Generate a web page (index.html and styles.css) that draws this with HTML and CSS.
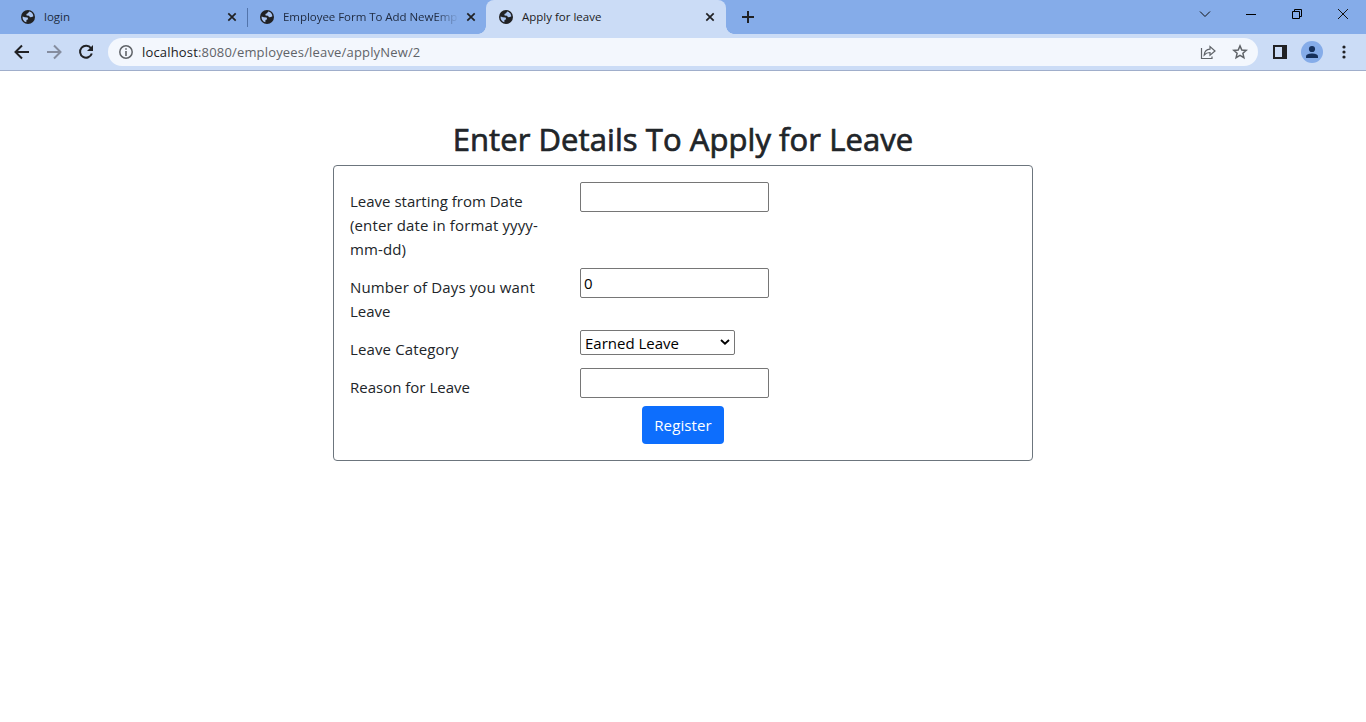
FILE: index.html
```html
<!DOCTYPE html>
<html lang="en">
<head>
<meta charset="utf-8">
<title>Apply for leave</title>
<link rel="stylesheet" href="styles.css">
</head>
<body>
<svg class="defs" width="0" height="0">
  <symbol id="globe" viewBox="0 0 14 14"><circle cx="7" cy="7" r="7" fill="#202124"/><path d="M8.2 1.6 7 3.200 5.400 4.100 5.600 5.600 8 5.800 9 7.200 11 7 12.400 6.200A5.500 5.500 0 0 0 8.200 1.600ZM1.600 6.500 3.800 7.300 6.600 7.500 7.200 9.200 5.500 10.100 5.300 12.300A5.600 5.600 0 0 1 1.600 6.500Z" fill="#a9c4f0"/></symbol>
  <symbol id="close" viewBox="0 0 10 10"><path d="M1.300 1.300 8.700 8.700M8.700 1.300 1.300 8.700" stroke="#202124" stroke-width="1.700"/></symbol>
</svg>
<header class="browser">
  <div class="tabstrip">
    <div class="tab tab-first"><svg class="favicon"><use href="#globe"/></svg><span class="tab-title">login</span><svg class="close"><use href="#close"/></svg></div>
    <div class="tab tab-second"><svg class="favicon"><use href="#globe"/></svg><span class="tab-title fade">Employee Form To Add NewEmp</span><svg class="close"><use href="#close"/></svg></div>
    <div class="tab tab-active"><svg class="favicon"><use href="#globe"/></svg><span class="tab-title">Apply for leave</span><svg class="close"><use href="#close"/></svg></div>
    <svg class="new-tab" viewBox="0 0 12 12"><path d="M6 0v12M0 6h12" stroke="#202124" stroke-width="2"/></svg>
    <div class="window-controls">
      <svg viewBox="0 0 12 12"><path d="M1 3.500 6 8.500 11 3.500" fill="none" stroke="#111"/></svg>
      <svg viewBox="0 0 12 12"><path d="M1 6.500h10" stroke="#000"/></svg>
      <svg viewBox="0 0 12 12"><path d="M1.500 3.500h7v7h-7zM3.500 3.500v-2h7v7h-2" fill="none" stroke="#000"/></svg>
      <svg viewBox="0 0 12 12"><path d="M1 1 11 11M11 1 1 11" stroke="#111"/></svg>
    </div>
  </div>
  <div class="toolbar">
    <svg class="nav" viewBox="0 0 16 16"><path d="M15 8H2M8 1.500 1.500 8 8 14.500" fill="none" stroke="#202124" stroke-width="2"/></svg>
    <svg class="nav" viewBox="0 0 16 16"><path d="M1 8h13M8 1.500 14.500 8 8 14.500" fill="none" stroke="#858d9f" stroke-width="2"/></svg>
    <svg class="nav" viewBox="0 0 16 16"><path d="M13 4.300A6 6 0 1 0 13.800 9.500" fill="none" stroke="#202124" stroke-width="2"/><path d="M15 1v6H9Z" fill="#202124"/></svg>
    <div class="address">
      <svg class="info" viewBox="0 0 14 14"><circle cx="7" cy="7" r="6.200" fill="none" stroke="#5f6368" stroke-width="1.500"/><path d="M7 3.200v1.600M7 6v5" stroke="#5f6368" stroke-width="1.600"/></svg>
      <span class="url"><b>localhost</b>:8080/employees/leave/applyNew/2</span>
      <svg class="share" viewBox="0 0 16 16"><path d="M1.500 4v10.500h10.500V12.500M4.200 11C4.500 7.500 6.500 5.400 10 5.200V2.500L15 7l-5 4.200V8.500C7.500 8.500 5.700 9.200 4.200 11Z" fill="none" stroke="#5f6368" stroke-width="1.200"/></svg>
      <svg class="star" viewBox="0 0 16 16"><path d="M8 1.900 9.800 6 14.200 6.400 10.900 9.300 11.900 13.700 8 11.400 4.100 13.700 5.100 9.300 1.800 6.400 6.200 6Z" fill="none" stroke="#5f6368" stroke-width="1.500"/></svg>
    </div>
    <svg class="panel" viewBox="0 0 14 14"><path d="M0 0h14v14H0ZM2 2v10h7V2Z" fill="#202124" fill-rule="evenodd"/></svg>
    <svg class="avatar" viewBox="0 0 22 22"><circle cx="11" cy="11" r="11" fill="#85ace9"/><circle cx="11" cy="8" r="3.100" fill="#16305b"/><path d="M5 17v-1.500C5 13.200 8.500 12.500 11 12.500s6 .7 6 3V17Z" fill="#16305b"/></svg>
    <svg class="dots" viewBox="0 0 4 14"><circle cx="2" cy="2" r="1.600"/><circle cx="2" cy="7" r="1.600"/><circle cx="2" cy="12" r="1.600"/></svg>
  </div>
</header>
<main>
  <h2>Enter Details To Apply for Leave</h2>
  <form class="card">
    <div class="row"><label for="start">Leave starting from Date<br><span class="loose">(enter date in format yyyy-</span><br><span class="loose">mm-dd)</span></label><input id="start" type="text"></div>
    <div class="row"><label for="days"><span class="loose">Number of Days you want</span><br>Leave</label><input id="days" type="text" value="0"></div>
    <div class="row"><label for="category"><span class="loose">Leave Category</span></label>
      <div class="select-wrap"><select id="category"><option>Earned Leave</option></select><svg class="chevron" viewBox="0 0 10 6"><path d="M1 1 5 4.600 9 1" fill="none" stroke="#000" stroke-width="1.900"/></svg></div></div>
    <div class="row"><label for="reason">Reason for Leave</label><input id="reason" type="text"></div>
    <button type="button">Register</button>
  </form>
</main>
</body>
</html>
```
FILE: styles.css
```css
* { box-sizing: border-box; }
body { margin: 0; background: #fff; color: #212529; font-family: "Open Sans", "Noto Sans", sans-serif; font-size: 15px; line-height: 24px; }
svg { display: block; flex: none; }
.defs { position: absolute; }
.browser { height: 71px; background: #cbdcf6; border-bottom: 1px solid #a0aecb; }
.tabstrip { display: flex; align-items: center; height: 34px; background: #85ace9; }
.tab { display: flex; align-items: center; height: 34px; color: #202c42; font-size: 11.5px; }
.tab-first { width: 248px; padding: 0 11px 0 21px; background: linear-gradient(#5274ab, #5274ab) 247px 8px / 1px 19px no-repeat; }
.tab-second { width: 238px; padding: 0 10px 0 12px; }
.tab-active { width: 240px; padding: 0 11px 0 13px; background: #cbdcf6; border-radius: 8px 8px 0 0; color: #202124; position: relative; }
.tab-active::before, .tab-active::after { content: ""; position: absolute; bottom: 0; width: 8px; height: 8px; }
.tab-active::before { left: -8px; background: radial-gradient(circle at 0 0, transparent 7.5px, #cbdcf6 8px); }
.tab-active::after { right: -8px; background: radial-gradient(circle at 100% 0, transparent 7.5px, #cbdcf6 8px); }
.favicon { width: 14px; height: 14px; margin-right: 9px; }
.close { width: 10px; height: 10px; margin-left: auto; }
.tab-title { white-space: nowrap; }
.fade { width: 174px; letter-spacing: -0.04px; mask: linear-gradient(to right, #000 152px, transparent 176px); }
.new-tab { width: 12px; height: 12px; margin-left: 16px; }
.window-controls { display: flex; gap: 34px; margin-left: auto; margin-right: 17px; padding-bottom: 6px; }
.window-controls svg { width: 12px; height: 12px; }
.toolbar { display: flex; align-items: center; height: 36px; padding: 0 20px 0 14px; }
.nav { width: 16px; height: 16px; margin-right: 16px; }
.address { display: flex; align-items: center; width: 1150px; height: 28px; margin-left: -2px; padding: 0 10px 0 11px; border-radius: 14px; background: #f3f7fd; }
.info { width: 14px; height: 14px; margin-right: 9px; }
.url { color: #5f6368; font-size: 13px; line-height: 20px; letter-spacing: 0.17px; }
.url b { color: #202124; font-weight: 400; }
.share { width: 16px; height: 16px; margin-left: auto; margin-right: 16px; }
.star { width: 16px; height: 16px; }
.panel { width: 14px; height: 14px; margin-left: 15px; }
.avatar { width: 22px; height: 22px; margin-left: 14px; }
.dots { width: 4px; height: 14px; margin-left: auto; fill: #202124; }
main { width: 700px; margin: 0 auto; padding-top: 49px; }
h2 { margin: 0 0 7px; font-size: 31px; line-height: 38px; font-weight: 500; letter-spacing: 0.07px; -webkit-text-stroke: 0.7px #212529; text-align: center; white-space: nowrap; }
.card { height: 296px; padding: 16px; border: 1px solid #6c757d; border-radius: 4px; }
.row { display: grid; grid-template-columns: 206px 1fr; column-gap: 24px; align-items: start; justify-items: start; }
label { padding: 7px 0; white-space: nowrap; }
.loose { letter-spacing: 0.13px; }
input { width: 189px; height: 30px; padding: 1px 3px 2px; border: 1px solid #767676; border-radius: 2px; background: #fff; font: inherit; color: #000; }
.select-wrap { position: relative; }
select { display: block; width: 155px; height: 25px; padding: 0 4px; border: 1px solid #767676; border-radius: 2px; background: #fff; appearance: none; color: #000; font: inherit; line-height: 22px; }
.chevron { position: absolute; right: 5px; top: 9px; width: 10px; height: 6px; }
button { display: block; width: 82px; height: 38px; margin: 0 auto; padding: 0; border: 0; border-radius: 4px; background: #0d6efd; color: #fff; font: inherit; letter-spacing: 0.1px; }
```
